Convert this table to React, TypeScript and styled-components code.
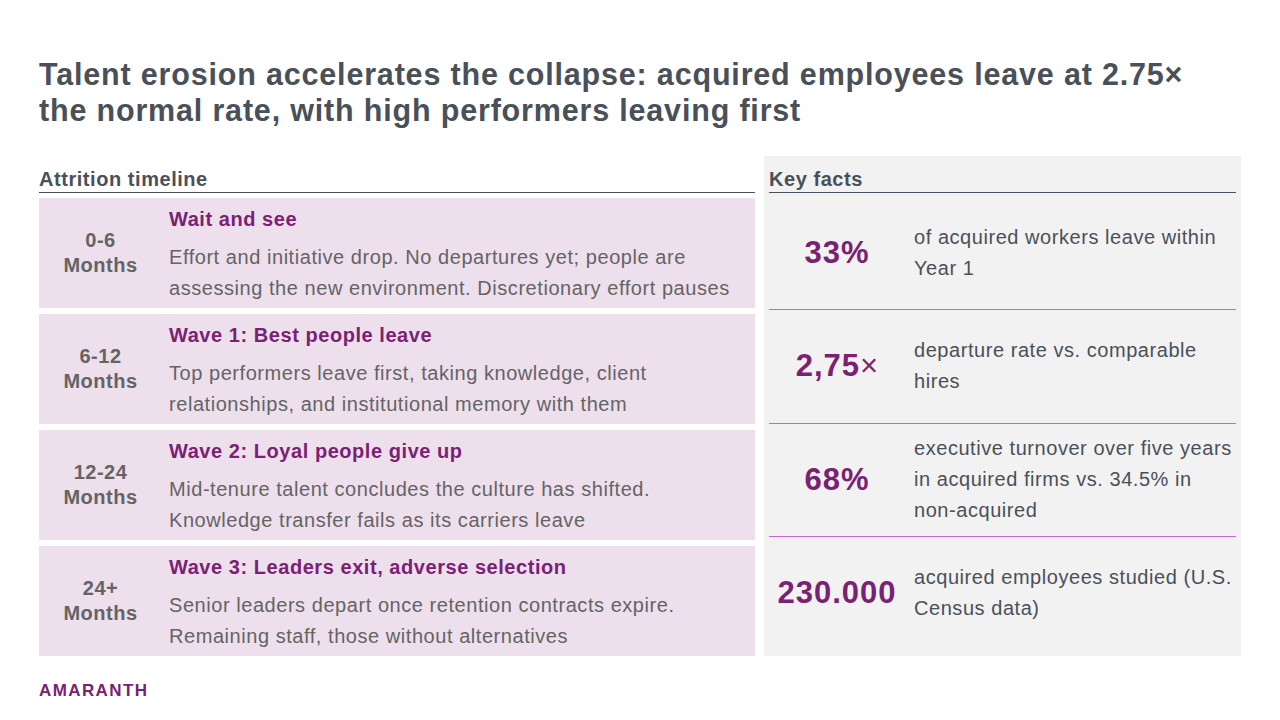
import React from 'react';
import styled, { createGlobalStyle } from 'styled-components';

const PURPLE = '#7b2173';
const SLATE = '#4a5059';
const GREY = '#646464';

const GlobalStyle = createGlobalStyle`
  html, body {
    margin: 0;
    padding: 0;
    background: #ffffff;
  }
  body {
    font-family: 'Liberation Sans', Arial, sans-serif;
  }
`;

const phases = [
  {
    range: '0-6',
    title: 'Wait and see',
    text: 'Effort and initiative drop. No departures yet; people are assessing the new environment. Discretionary effort pauses',
  },
  {
    range: '6-12',
    title: 'Wave 1: Best people leave',
    text: 'Top performers leave first, taking knowledge, client relationships, and institutional memory with them',
  },
  {
    range: '12-24',
    title: 'Wave 2: Loyal people give up',
    text: 'Mid-tenure talent concludes the culture has shifted. Knowledge transfer fails as its carriers leave',
  },
  {
    range: '24+',
    title: 'Wave 3: Leaders exit, adverse selection',
    text: 'Senior leaders depart once retention contracts expire. Remaining staff, those without alternatives',
  },
];

const facts = [
  { value: '33%', unit: '', text: 'of acquired workers leave within Year 1' },
  { value: '2,75', unit: '×', text: 'departure rate vs. comparable hires' },
  { value: '68%', unit: '', text: 'executive turnover over five years in acquired firms vs. 34.5% in', tail: 'non-acquired' },
  { value: '230.000', unit: '', text: 'acquired employees studied (U.S. Census data)' },
];

const App = () => {
  return (
    <>
      <GlobalStyle />
      <Slide>
        <Title>
          Talent erosion accelerates the collapse: acquired employees leave at 2.75×
          <br />
          the normal rate, with high performers leaving first
        </Title>
        <Body>
          <Timeline>
            <SectionHeader>Attrition timeline</SectionHeader>
            <PhaseList>
              {phases.map((p) => (
                <Phase key={p.range}>
                  <PhaseRange>
                    {p.range}
                    <br />
                    Months
                  </PhaseRange>
                  <PhaseContent>
                    <PhaseTitle>{p.title}</PhaseTitle>
                    <PhaseText>{p.text}</PhaseText>
                  </PhaseContent>
                </Phase>
              ))}
            </PhaseList>
          </Timeline>
          <FactsPanel>
            <SectionHeader>Key facts</SectionHeader>
            <FactList>
              {facts.map((f, i) => (
                <Fact key={f.value} $last={i === facts.length - 1}>
                  <FactValue>
                    {f.value}
                    {f.unit && <FactUnit>{f.unit}</FactUnit>}
                  </FactValue>
                  <FactText>
                    {f.text}
                    {f.tail && (
                      <>
                        {' '}
                        <NoWrap>{f.tail}</NoWrap>
                      </>
                    )}
                  </FactText>
                </Fact>
              ))}
            </FactList>
          </FactsPanel>
        </Body>
        <Brand>AMARANTH</Brand>
      </Slide>
    </>
  );
};

export default App;

const Slide = styled.div`
  width: 1280px;
  height: 720px;
  box-sizing: border-box;
  padding: 56px 39px 0 39px;
  display: flex;
  flex-direction: column;
  overflow: hidden;
`;

const Title = styled.h1`
  margin: 0;
  font-size: 30.5px;
  line-height: 36px;
  letter-spacing: 0.82px;
  font-weight: 700;
  color: ${SLATE};
  white-space: nowrap;
`;

const Body = styled.div`
  margin-top: 28px;
  display: flex;
  gap: 9px;
  height: 500px;
`;

const Timeline = styled.div`
  width: 716px;
  display: flex;
  flex-direction: column;
`;

const SectionHeader = styled.div`
  font-size: 20px;
  font-weight: 700;
  letter-spacing: 0.55px;
  color: ${SLATE};
  line-height: 22px;
  padding-top: 12px;
  padding-bottom: 2px;
  border-bottom: 1px solid ${SLATE};
`;

const PhaseList = styled.div`
  flex: 1;
  display: flex;
  flex-direction: column;
  gap: 6px;
  padding-top: 5px;
`;

const Phase = styled.div`
  flex: 1;
  background: #eedfec;
  display: flex;
  align-items: stretch;
`;

const PhaseRange = styled.div`
  width: 123px;
  flex-shrink: 0;
  display: flex;
  align-items: center;
  justify-content: center;
  text-align: center;
  font-size: 20px;
  line-height: 25px;
  letter-spacing: 0.5px;
  font-weight: 700;
  color: ${GREY};
`;

const PhaseContent = styled.div`
  padding: 9px 0 0 7px;
`;

const PhaseTitle = styled.div`
  font-size: 20px;
  line-height: 24px;
  letter-spacing: 0.55px;
  font-weight: 700;
  color: ${PURPLE};
  margin-bottom: 11px;
`;

const PhaseText = styled.div`
  font-size: 20px;
  line-height: 31px;
  letter-spacing: 0.55px;
  color: ${GREY};
`;

const FactsPanel = styled.div`
  flex: 1;
  background: #f2f2f2;
  padding: 0 5px;
  display: flex;
  flex-direction: column;
`;

const FactList = styled.div`
  flex: 1;
  display: flex;
  flex-direction: column;
  padding: 4px 0 7px;
`;

const Fact = styled.div<{ $last: boolean }>`
  flex: 1;
  display: flex;
  align-items: center;
  border-bottom: ${(p) => (p.$last ? 'none' : '1px solid #d063cf')};
`;

const FactValue = styled.div`
  width: 136px;
  flex-shrink: 0;
  text-align: center;
  font-size: 31px;
  letter-spacing: 1px;
  font-weight: 700;
  color: ${PURPLE};
`;

const FactUnit = styled.span`
  font-weight: 400;
  letter-spacing: 0;
`;

const FactText = styled.div`
  padding-left: 9px;
  font-size: 20px;
  line-height: 31px;
  letter-spacing: 0.55px;
  color: ${SLATE};
`;

const NoWrap = styled.span`
  white-space: nowrap;
`;

const Brand = styled.div`
  margin-top: 25px;
  font-size: 17px;
  line-height: 20px;
  font-weight: 700;
  letter-spacing: 1.4px;
  color: ${PURPLE};
`;
